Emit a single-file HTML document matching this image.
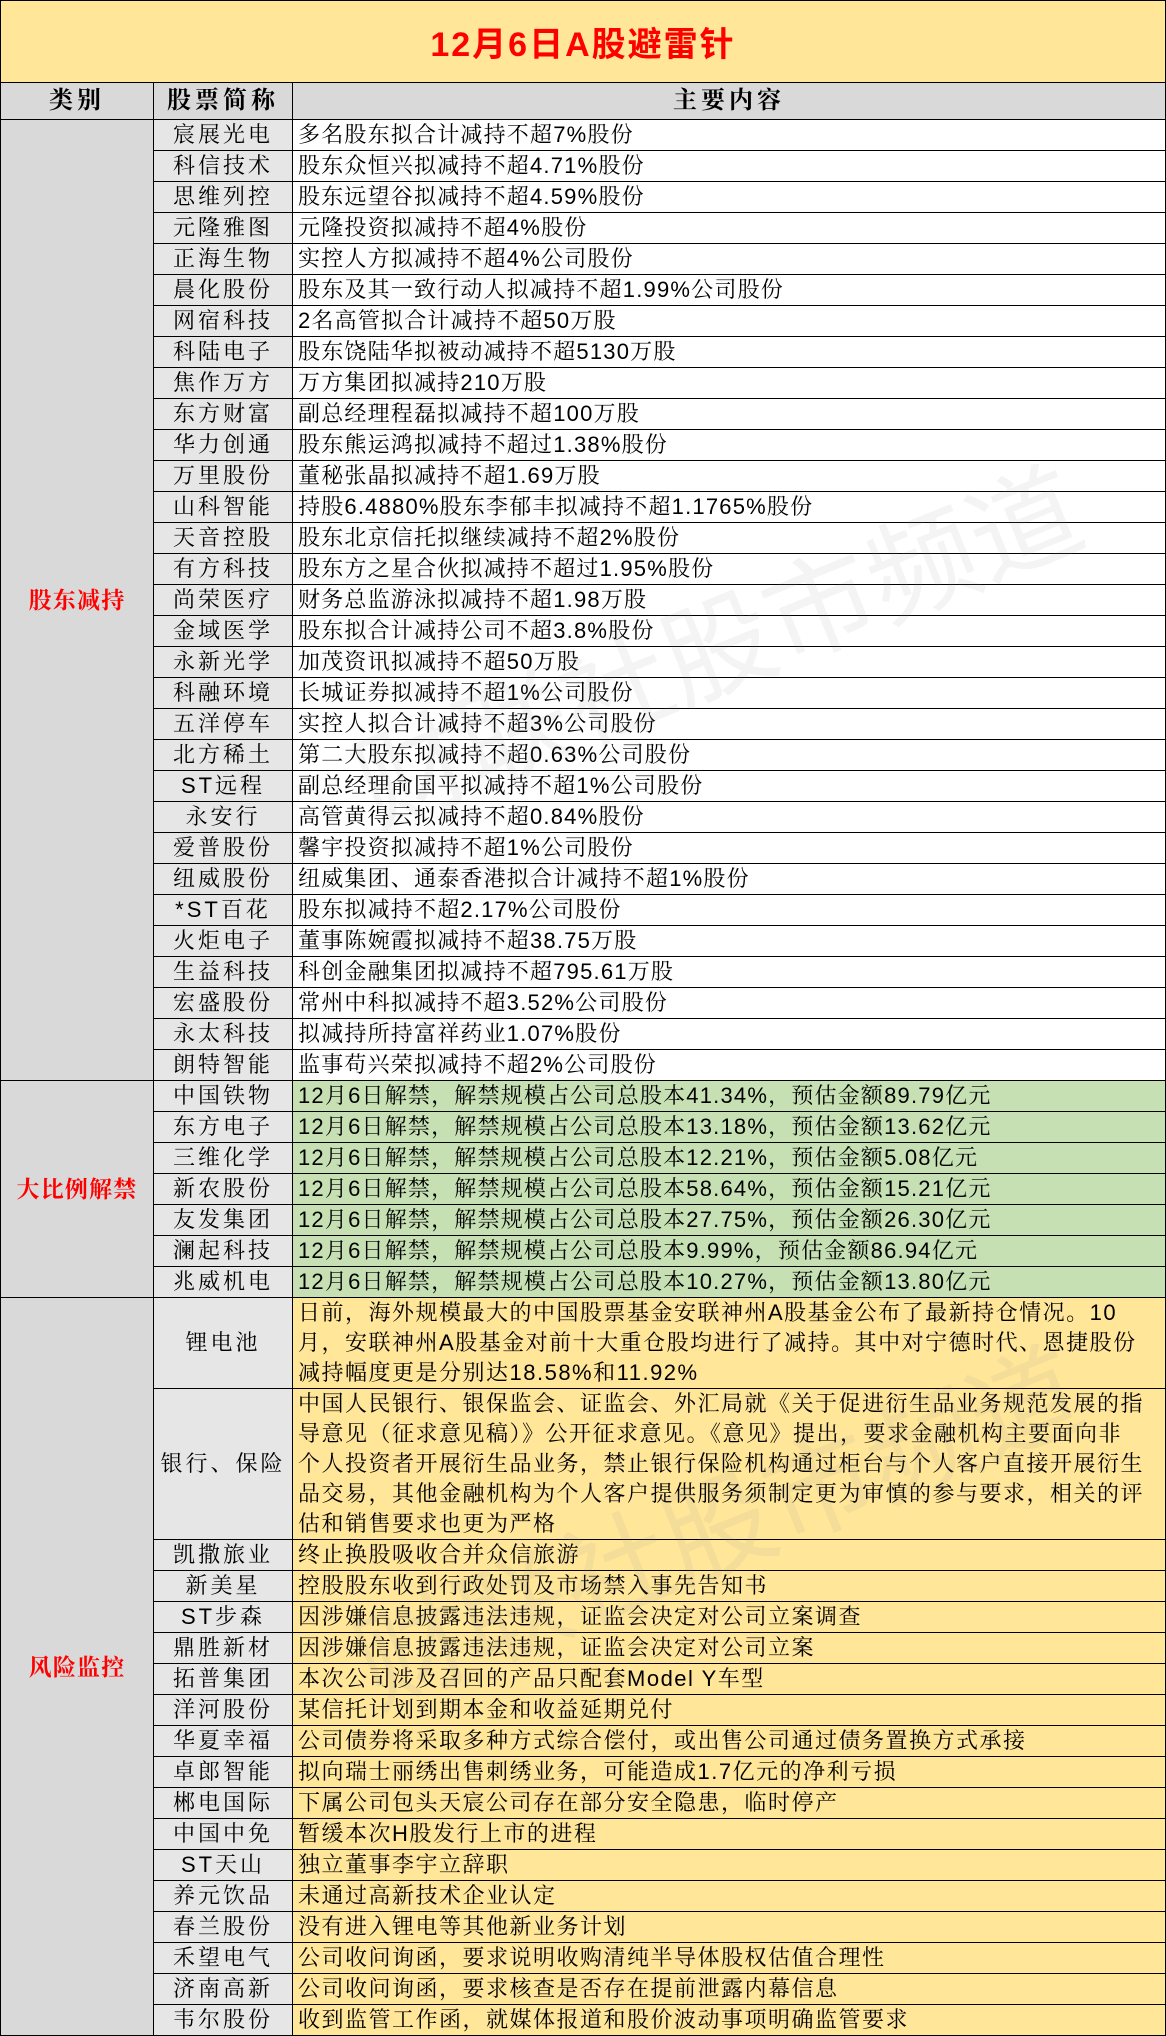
<!DOCTYPE html>
<html><head><meta charset="utf-8"><style>
body{margin:0;width:1166px;height:2018px;overflow:hidden;background:#fff;font-family:"Liberation Sans","Noto Serif CJK SC",serif;position:relative}
table{border-collapse:collapse;table-layout:fixed;width:1166px;position:absolute;left:0;top:0}
td{border:1.5px solid #000;padding:0;font-size:22px;line-height:30px;overflow:hidden;white-space:nowrap;letter-spacing:1.2px}
.t{background:#FFE699;height:81px;text-align:center;color:#f00;font:bold 34px "Liberation Sans","Noto Sans CJK SC",sans-serif;letter-spacing:2px}
.h td{background:#D9D9D9;height:36px;text-align:center;font-weight:bold;font-size:24px;letter-spacing:4px}
.c{background:#D9D9D9;text-align:center;color:#f00;font-weight:bold;font-size:23px}
.n{background:#E7E6E6;text-align:center;letter-spacing:3px}
.s td{height:30px}
.s .x{padding-left:5px;background:#fff}
.g td{height:30px}
.g .x{padding-left:5px;background:#C6E0B4}
.r td{height:29px}
.y{padding-left:5px;padding-right:2px;background:#FFE699;white-space:normal;letter-spacing:1.5px;word-break:break-all}
.wm{position:absolute;font-size:110px;color:rgba(150,150,150,0.10);transform:rotate(-22deg);white-space:nowrap;font-family:"Noto Sans CJK SC",sans-serif;pointer-events:none}
</style></head><body>
<table>
<colgroup><col style="width:153px"><col style="width:139px"><col></colgroup>
<tr><td class="t" colspan="3">12月6日A股避雷针</td></tr>
<tr class="h"><td>类别</td><td>股票简称</td><td>主要内容</td></tr>
<tr class="s"><td class="c" rowspan="31">股东减持</td><td class="n">宸展光电</td><td class="x">多名股东拟合计减持不超7%股份</td></tr>
<tr class="s"><td class="n">科信技术</td><td class="x">股东众恒兴拟减持不超4.71%股份</td></tr>
<tr class="s"><td class="n">思维列控</td><td class="x">股东远望谷拟减持不超4.59%股份</td></tr>
<tr class="s"><td class="n">元隆雅图</td><td class="x">元隆投资拟减持不超4%股份</td></tr>
<tr class="s"><td class="n">正海生物</td><td class="x">实控人方拟减持不超4%公司股份</td></tr>
<tr class="s"><td class="n">晨化股份</td><td class="x">股东及其一致行动人拟减持不超1.99%公司股份</td></tr>
<tr class="s"><td class="n">网宿科技</td><td class="x">2名高管拟合计减持不超50万股</td></tr>
<tr class="s"><td class="n">科陆电子</td><td class="x">股东饶陆华拟被动减持不超5130万股</td></tr>
<tr class="s"><td class="n">焦作万方</td><td class="x">万方集团拟减持210万股</td></tr>
<tr class="s"><td class="n">东方财富</td><td class="x">副总经理程磊拟减持不超100万股</td></tr>
<tr class="s"><td class="n">华力创通</td><td class="x">股东熊运鸿拟减持不超过1.38%股份</td></tr>
<tr class="s"><td class="n">万里股份</td><td class="x">董秘张晶拟减持不超1.69万股</td></tr>
<tr class="s"><td class="n">山科智能</td><td class="x">持股6.4880%股东李郁丰拟减持不超1.1765%股份</td></tr>
<tr class="s"><td class="n">天音控股</td><td class="x">股东北京信托拟继续减持不超2%股份</td></tr>
<tr class="s"><td class="n">有方科技</td><td class="x">股东方之星合伙拟减持不超过1.95%股份</td></tr>
<tr class="s"><td class="n">尚荣医疗</td><td class="x">财务总监游泳拟减持不超1.98万股</td></tr>
<tr class="s"><td class="n">金域医学</td><td class="x">股东拟合计减持公司不超3.8%股份</td></tr>
<tr class="s"><td class="n">永新光学</td><td class="x">加茂资讯拟减持不超50万股</td></tr>
<tr class="s"><td class="n">科融环境</td><td class="x">长城证券拟减持不超1%公司股份</td></tr>
<tr class="s"><td class="n">五洋停车</td><td class="x">实控人拟合计减持不超3%公司股份</td></tr>
<tr class="s"><td class="n">北方稀土</td><td class="x">第二大股东拟减持不超0.63%公司股份</td></tr>
<tr class="s"><td class="n">ST远程</td><td class="x">副总经理俞国平拟减持不超1%公司股份</td></tr>
<tr class="s"><td class="n">永安行</td><td class="x">高管黄得云拟减持不超0.84%股份</td></tr>
<tr class="s"><td class="n">爱普股份</td><td class="x">馨宇投资拟减持不超1%公司股份</td></tr>
<tr class="s"><td class="n">纽威股份</td><td class="x">纽威集团、通泰香港拟合计减持不超1%股份</td></tr>
<tr class="s"><td class="n">*ST百花</td><td class="x">股东拟减持不超2.17%公司股份</td></tr>
<tr class="s"><td class="n">火炬电子</td><td class="x">董事陈婉霞拟减持不超38.75万股</td></tr>
<tr class="s"><td class="n">生益科技</td><td class="x">科创金融集团拟减持不超795.61万股</td></tr>
<tr class="s"><td class="n">宏盛股份</td><td class="x">常州中科拟减持不超3.52%公司股份</td></tr>
<tr class="s"><td class="n">永太科技</td><td class="x">拟减持所持富祥药业1.07%股份</td></tr>
<tr class="s"><td class="n">朗特智能</td><td class="x">监事苟兴荣拟减持不超2%公司股份</td></tr>
<tr class="g"><td class="c" rowspan="7">大比例解禁</td><td class="n">中国铁物</td><td class="x">12月6日解禁，解禁规模占公司总股本41.34%，预估金额89.79亿元</td></tr>
<tr class="g"><td class="n">东方电子</td><td class="x">12月6日解禁，解禁规模占公司总股本13.18%，预估金额13.62亿元</td></tr>
<tr class="g"><td class="n">三维化学</td><td class="x">12月6日解禁，解禁规模占公司总股本12.21%，预估金额5.08亿元</td></tr>
<tr class="g"><td class="n">新农股份</td><td class="x">12月6日解禁，解禁规模占公司总股本58.64%，预估金额15.21亿元</td></tr>
<tr class="g"><td class="n">友发集团</td><td class="x">12月6日解禁，解禁规模占公司总股本27.75%，预估金额26.30亿元</td></tr>
<tr class="g"><td class="n">澜起科技</td><td class="x">12月6日解禁，解禁规模占公司总股本9.99%，预估金额86.94亿元</td></tr>
<tr class="g"><td class="n">兆威机电</td><td class="x">12月6日解禁，解禁规模占公司总股本10.27%，预估金额13.80亿元</td></tr>
<tr class="r"><td class="c" rowspan="18">风险监控</td><td class="n" style="height:89px">锂电池</td><td class="y">日前，海外规模最大的中国股票基金安联神州A股基金公布了最新持仓情况。10<br>月，安联神州A股基金对前十大重仓股均进行了减持。其中对宁德时代、恩捷股份<br>减持幅度更是分别达18.58%和11.92%</td></tr>
<tr class="r"><td class="n" style="height:149px">银行、保险</td><td class="y">中国人民银行、银保监会、证监会、外汇局就《关于促进衍生品业务规范发展的指<br>导意见（征求意见稿）》公开征求意见。《意见》提出，要求金融机构主要面向非<br>个人投资者开展衍生品业务，禁止银行保险机构通过柜台与个人客户直接开展衍生<br>品交易，其他金融机构为个人客户提供服务须制定更为审慎的参与要求，相关的评<br>估和销售要求也更为严格</td></tr>
<tr class="r"><td class="n">凯撒旅业</td><td class="y">终止换股吸收合并众信旅游</td></tr>
<tr class="r"><td class="n">新美星</td><td class="y">控股股东收到行政处罚及市场禁入事先告知书</td></tr>
<tr class="r"><td class="n">ST步森</td><td class="y">因涉嫌信息披露违法违规，证监会决定对公司立案调查</td></tr>
<tr class="r"><td class="n">鼎胜新材</td><td class="y">因涉嫌信息披露违法违规，证监会决定对公司立案</td></tr>
<tr class="r"><td class="n">拓普集团</td><td class="y">本次公司涉及召回的产品只配套Model Y车型</td></tr>
<tr class="r"><td class="n">洋河股份</td><td class="y">某信托计划到期本金和收益延期兑付</td></tr>
<tr class="r"><td class="n">华夏幸福</td><td class="y">公司债券将采取多种方式综合偿付，或出售公司通过债务置换方式承接</td></tr>
<tr class="r"><td class="n">卓郎智能</td><td class="y">拟向瑞士丽绣出售刺绣业务，可能造成1.7亿元的净利亏损</td></tr>
<tr class="r"><td class="n">郴电国际</td><td class="y">下属公司包头天宸公司存在部分安全隐患，临时停产</td></tr>
<tr class="r"><td class="n">中国中免</td><td class="y">暂缓本次H股发行上市的进程</td></tr>
<tr class="r"><td class="n">ST天山</td><td class="y">独立董事李宇立辞职</td></tr>
<tr class="r"><td class="n">养元饮品</td><td class="y">未通过高新技术企业认定</td></tr>
<tr class="r"><td class="n">春兰股份</td><td class="y">没有进入锂电等其他新业务计划</td></tr>
<tr class="r"><td class="n">禾望电气</td><td class="y">公司收问询函，要求说明收购清纯半导体股权估值合理性</td></tr>
<tr class="r"><td class="n">济南高新</td><td class="y">公司收问询函，要求核查是否存在提前泄露内幕信息</td></tr>
<tr class="r"><td class="n">韦尔股份</td><td class="y">收到监管工作函，就媒体报道和股价波动事项明确监管要求</td></tr>
</table>
<div class="wm" style="left:330px;top:560px">财联社股市频道</div>
<div class="wm" style="left:330px;top:1440px">财联社股市频道</div>
</body></html>
